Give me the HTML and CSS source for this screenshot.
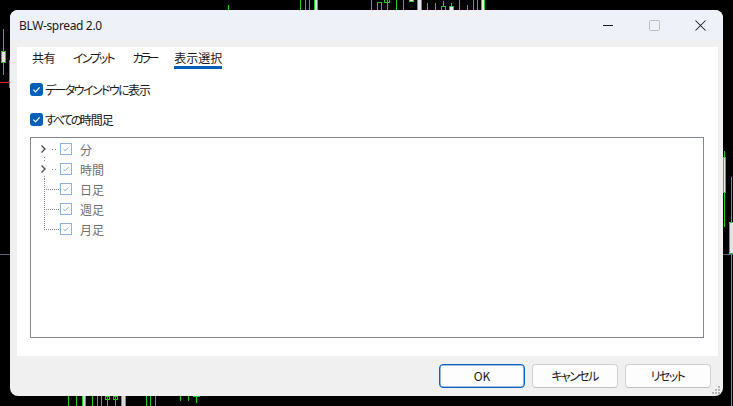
FILE: index.html
```html
<!DOCTYPE html>
<html lang="ja">
<head>
<meta charset="utf-8">
<title>BLW-spread 2.0</title>
<link rel="stylesheet" href="styles.css">
</head>
<body>
<div class="desktop">
  <svg class="chart" width="733" height="406" viewBox="0 0 733 406">
    <g stroke="#1fd01f" stroke-width="1" fill="none" shape-rendering="crispEdges">
      <!-- top -->
      <line x1="228.5" y1="5" x2="228.5" y2="12"/>
      <line x1="300.5" y1="0" x2="300.5" y2="12"/>
      <line x1="305.5" y1="0" x2="305.5" y2="12"/>
      <line x1="309.5" y1="0" x2="309.5" y2="12"/>
      <rect x="314.5" y="-1" width="3" height="13" fill="#e4e4e4"/>
      <line x1="371.5" y1="0" x2="371.5" y2="12"/>
      <rect x="377.5" y="2.5" width="4" height="10"/>
      <line x1="387.5" y1="0" x2="387.5" y2="12"/>
      <rect x="384.5" y="-1" width="5" height="3.5"/>
      <line x1="396.5" y1="0" x2="396.5" y2="12"/>
      <line x1="403.5" y1="0" x2="403.5" y2="12"/>
      <rect x="409.5" y="-1" width="4" height="2.5" fill="#e4e4e4"/>
      <rect x="417.5" y="-1" width="4" height="13" fill="#e4e4e4"/>
      <line x1="427.5" y1="3" x2="427.5" y2="12"/>
      <line x1="435.5" y1="3" x2="435.5" y2="12"/>
      <line x1="443.5" y1="1" x2="443.5" y2="6"/>
      <rect x="441.5" y="6.5" width="4" height="6"/>
      <line x1="451.5" y1="3" x2="451.5" y2="6"/>
      <rect x="449.5" y="6.5" width="4" height="6" fill="#e4e4e4"/>
      <line x1="459.5" y1="0" x2="459.5" y2="12"/>
      <line x1="467.5" y1="5" x2="467.5" y2="12"/>
      <line x1="473.5" y1="0" x2="473.5" y2="12"/>
      <line x1="477.5" y1="0" x2="477.5" y2="12"/>
      <rect x="481.5" y="-1" width="3" height="13" fill="#e4e4e4"/>
      <!-- left -->
      <line x1="3.5" y1="29" x2="3.5" y2="75"/>
      <rect x="1.5" y="51.5" width="4" height="11" fill="#e4e4e4"/>
      <line x1="9.5" y1="60" x2="9.5" y2="88"/>
      <!-- right -->
      <line x1="724.5" y1="151" x2="724.5" y2="227"/>
      <rect x="723.5" y="157.5" width="2" height="35" fill="#e4e4e4"/>
      <line x1="731.5" y1="177" x2="731.5" y2="406"/>
      <rect x="729.5" y="222.5" width="5" height="31" fill="#e4e4e4"/>
      <!-- bottom -->
      <line x1="68.5" y1="394" x2="68.5" y2="406"/>
      <line x1="76.5" y1="394" x2="76.5" y2="406"/>
      <rect x="82.5" y="394" width="3" height="13" fill="#d8d8d8"/>
      <line x1="92.5" y1="394" x2="92.5" y2="406"/>
      <line x1="97.5" y1="394" x2="97.5" y2="406"/>
      <line x1="101.5" y1="394" x2="101.5" y2="406"/>
      <line x1="107.5" y1="394" x2="107.5" y2="406"/>
      <rect x="105.5" y="396.5" width="4" height="3"/>
      <line x1="115.5" y1="394" x2="115.5" y2="406"/>
      <rect x="113.5" y="396.5" width="4" height="3"/>
      <rect x="121.5" y="394" width="4" height="13" fill="#d8d8d8"/>
      <line x1="146.5" y1="394" x2="146.5" y2="406"/>
      <line x1="150.5" y1="394" x2="150.5" y2="406"/>
      <line x1="155.5" y1="394" x2="155.5" y2="406"/>
      <line x1="180.5" y1="394" x2="180.5" y2="401"/>
      <line x1="188.5" y1="394" x2="188.5" y2="401"/>
      <line x1="196.5" y1="394" x2="196.5" y2="403"/>
      <line x1="193" y1="396.5" x2="200" y2="396.5"/>
    </g>
    <line x1="0" y1="82.5" x2="12" y2="82.5" stroke="#e02828" shape-rendering="crispEdges"/>
    <line x1="0" y1="254.5" x2="12" y2="254.5" stroke="#56667e" shape-rendering="crispEdges"/>
    <line x1="721" y1="254.5" x2="733" y2="254.5" stroke="#56667e" shape-rendering="crispEdges"/>
  </svg>

  <div class="window">
    <div class="titlebar">
      <span class="title">BLW-spread 2.0</span>
      <div class="caption">
        <span class="cbtn">
          <svg width="10" height="10" viewBox="0 0 10 10"><line x1="0" y1="5.5" x2="10" y2="5.5" stroke="#1a1a1a" shape-rendering="crispEdges"/></svg>
        </span>
        <span class="cbtn">
          <svg width="11" height="11" viewBox="0 0 11 11"><rect x="0.5" y="0.5" width="10" height="10" rx="1" fill="none" stroke="#bdbdbd"/></svg>
        </span>
        <span class="cbtn">
          <svg width="11" height="11" viewBox="0 0 11 11"><path d="M0.5 0.5 L10.5 10.5 M10.5 0.5 L0.5 10.5" stroke="#1a1a1a" stroke-width="1.05" fill="none"/></svg>
        </span>
      </div>
    </div>

    <div class="client">
      <div class="panel">
        <div class="tabs">
          <span class="tab t-share">共有</span>
          <span class="tab t-input">インプット</span>
          <span class="tab t-color">カラー</span>
          <span class="tab t-view active">表示選択</span>
        </div>

        <div class="options">
          <label class="opt">
            <svg class="cb" width="13" height="13" viewBox="0 0 13 13"><rect width="13" height="13" rx="3" fill="#005fb8"/><path d="M3.4 6.7 L5.5 8.8 L9.6 4.3" stroke="#fff" stroke-width="1.2" fill="none"/></svg>
            <span class="opt-text"><span class="kana-a">データウインドウに</span><span class="kanji">表示</span></span>
          </label>
          <label class="opt">
            <svg class="cb" width="13" height="13" viewBox="0 0 13 13"><rect width="13" height="13" rx="3" fill="#005fb8"/><path d="M3.4 6.7 L5.5 8.8 L9.6 4.3" stroke="#fff" stroke-width="1.2" fill="none"/></svg>
            <span class="opt-text"><span class="kana-b">すべての</span><span class="kanji">時間足</span></span>
          </label>
        </div>

        <div class="tree">
          <div class="row">
            <svg class="gutter" width="29" height="20" viewBox="0 0 29 20" shape-rendering="crispEdges">
              <path d="M10.5 6.5 L14 10 L10.5 13.5" stroke="#4a4a4a" stroke-width="1.3" fill="none" shape-rendering="geometricPrecision"/>
              <rect x="21" y="10" width="1" height="1" fill="#8a8a8a"/>
              <rect x="24" y="10" width="1" height="1" fill="#8a8a8a"/>
              <rect x="13" y="18" width="1" height="1" fill="#8a8a8a"/>
            </svg>
            <svg class="tcb" width="12" height="12" viewBox="0 0 12 12"><rect x="0.5" y="0.5" width="11" height="11" fill="#fff" stroke="#8eb2d8"/><path d="M3.5 6.2 L5.1 7.7 L8.6 4.2" stroke="#7fa8d6" stroke-width="1" fill="none"/></svg>
            <span class="label">分</span>
          </div>
          <div class="row">
            <svg class="gutter" width="29" height="20" viewBox="0 0 29 20" shape-rendering="crispEdges">
              <rect x="13" y="1" width="1" height="1" fill="#8a8a8a"/>
              <path d="M10.5 6.5 L14 10 L10.5 13.5" stroke="#4a4a4a" stroke-width="1.3" fill="none" shape-rendering="geometricPrecision"/>
              <rect x="21" y="10" width="1" height="1" fill="#8a8a8a"/>
              <rect x="24" y="10" width="1" height="1" fill="#8a8a8a"/>
              <line x1="13.5" y1="17" x2="13.5" y2="20" stroke="#8a8a8a" stroke-dasharray="1 1"/>
            </svg>
            <svg class="tcb" width="12" height="12" viewBox="0 0 12 12"><rect x="0.5" y="0.5" width="11" height="11" fill="#fff" stroke="#8eb2d8"/><path d="M3.5 6.2 L5.1 7.7 L8.6 4.2" stroke="#7fa8d6" stroke-width="1" fill="none"/></svg>
            <span class="label">時間</span>
          </div>
          <div class="row">
            <svg class="gutter" width="29" height="20" viewBox="0 0 29 20" shape-rendering="crispEdges">
              <line x1="13.5" y1="0" x2="13.5" y2="20" stroke="#8a8a8a" stroke-dasharray="1 1"/>
              <line x1="15" y1="10.5" x2="29" y2="10.5" stroke="#8a8a8a" stroke-dasharray="1 1"/>
            </svg>
            <svg class="tcb" width="12" height="12" viewBox="0 0 12 12"><rect x="0.5" y="0.5" width="11" height="11" fill="#fff" stroke="#8eb2d8"/><path d="M3.5 6.2 L5.1 7.7 L8.6 4.2" stroke="#7fa8d6" stroke-width="1" fill="none"/></svg>
            <span class="label">日足</span>
          </div>
          <div class="row">
            <svg class="gutter" width="29" height="20" viewBox="0 0 29 20" shape-rendering="crispEdges">
              <line x1="13.5" y1="0" x2="13.5" y2="20" stroke="#8a8a8a" stroke-dasharray="1 1"/>
              <line x1="15" y1="10.5" x2="29" y2="10.5" stroke="#8a8a8a" stroke-dasharray="1 1"/>
            </svg>
            <svg class="tcb" width="12" height="12" viewBox="0 0 12 12"><rect x="0.5" y="0.5" width="11" height="11" fill="#fff" stroke="#8eb2d8"/><path d="M3.5 6.2 L5.1 7.7 L8.6 4.2" stroke="#7fa8d6" stroke-width="1" fill="none"/></svg>
            <span class="label">週足</span>
          </div>
          <div class="row">
            <svg class="gutter" width="29" height="20" viewBox="0 0 29 20" shape-rendering="crispEdges">
              <line x1="13.5" y1="0" x2="13.5" y2="11" stroke="#8a8a8a" stroke-dasharray="1 1"/>
              <line x1="15" y1="10.5" x2="29" y2="10.5" stroke="#8a8a8a" stroke-dasharray="1 1"/>
            </svg>
            <svg class="tcb" width="12" height="12" viewBox="0 0 12 12"><rect x="0.5" y="0.5" width="11" height="11" fill="#fff" stroke="#8eb2d8"/><path d="M3.5 6.2 L5.1 7.7 L8.6 4.2" stroke="#7fa8d6" stroke-width="1" fill="none"/></svg>
            <span class="label">月足</span>
          </div>
        </div>
      </div>

      <div class="footer">
        <button class="btn default">OK</button>
        <button class="btn kana">キャンセル</button>
        <button class="btn kana">リセット</button>
      </div>
    </div>

    <svg class="grip" width="8" height="8" viewBox="0 0 8 8" shape-rendering="crispEdges">
      <g fill="#b4b4b4">
        <rect x="6" y="0" width="2" height="2"/>
        <rect x="3" y="3" width="2" height="2"/><rect x="6" y="3" width="2" height="2"/>
        <rect x="0" y="6" width="2" height="2"/><rect x="3" y="6" width="2" height="2"/><rect x="6" y="6" width="2" height="2"/>
      </g>
    </svg>
  </div>
</div>
</body>
</html>
```
FILE: styles.css
```css
* { box-sizing: border-box; }

html, body {
  margin: 0;
  padding: 0;
  background: #000;
}

body {
  width: 733px;
  height: 406px;
  overflow: hidden;
  font-family: "Noto Sans CJK JP", sans-serif;
  font-size: 12px;
  font-feature-settings: "palt" 1;
  color: #1a1a1a;
}

.desktop {
  position: relative;
  width: 733px;
  height: 406px;
  background: #000;
}

.chart {
  position: absolute;
  left: 0;
  top: 0;
}

.window {
  position: absolute;
  left: 10px;
  top: 10px;
  width: 713px;
  height: 386px;
  border-radius: 8px;
  background: #f0f0f0;
  overflow: hidden;
  display: flex;
  flex-direction: column;
}

.titlebar {
  height: 30px;
  flex: none;
  background: #eef2f8;
  display: flex;
  align-items: center;
  justify-content: space-between;
}

.title {
  padding-left: 9px;
  font-family: "Noto Sans", sans-serif;
  font-size: 12px;
  letter-spacing: -0.35px;
  color: #1a1a1a;
}

.caption {
  display: flex;
  height: 30px;
}

.cbtn {
  width: 46px;
  height: 30px;
  display: flex;
  align-items: center;
  justify-content: center;
}

.cbtn svg { display: block; }

.client {
  flex: 1;
  display: flex;
  flex-direction: column;
  padding: 7px 5px 0 7px;
}

.panel {
  height: 309px;
  flex: none;
  background: #fff;
  display: flex;
  flex-direction: column;
}

.tabs {
  display: flex;
  padding: 2px 0 0 15px;
}

.tab {
  line-height: 17px;
  border-bottom: 3px solid transparent;
  color: #1a1a1a;
}

.t-share { margin-right: 18px; letter-spacing: -0.5px; }
.t-input { letter-spacing: -2px; margin-right: 19px; }
.t-color { letter-spacing: -3.2px; margin-right: 18px; }
.t-view { letter-spacing: 0; }

.tab.active {
  border-bottom-color: #005fb8;
}

.options {
  display: flex;
  flex-direction: column;
  gap: 10px;
  padding: 10px 0 0 13px;
}

.opt {
  display: flex;
  align-items: center;
  height: 20px;
  gap: 2px;
  color: #1a1a1a;
}

.kana-a { letter-spacing: -1.6px; }
.kana-b { letter-spacing: -2.4px; }
.kanji { letter-spacing: -1px; }

.cb { display: block; flex: none; }

.tree {
  margin: 8px 14px 0 13px;
  height: 201px;
  border: 1px solid #838790;
  padding-top: 1px;
  display: flex;
  flex-direction: column;
}

.row {
  height: 20px;
  display: flex;
  align-items: center;
}

.gutter { display: block; flex: none; }

.tcb { display: block; flex: none; }

.label {
  margin-left: 8px;
  color: #707070;
  line-height: 19px;
}

.footer {
  display: flex;
  justify-content: flex-end;
  gap: 7px;
  padding: 8px 7px 0 0;
}

.btn {
  width: 86px;
  height: 24px;
  border: 1px solid #d0d0d0;
  border-bottom-color: #c2c2c2;
  border-radius: 4px;
  background: #fdfdfd;
  font-family: "Noto Sans CJK JP", sans-serif;
  font-feature-settings: "palt" 1;
  font-size: 12px;
  color: #1a1a1a;
  padding: 0;
  line-height: 20px;
}

.btn.kana { letter-spacing: -1.6px; text-indent: -1px; }

.btn.default {
  border: 1px solid #0a64be;
  box-shadow: inset 0 0 0 0.6px #3d86d0;
}

.grip {
  position: absolute;
  right: 3px;
  bottom: 2px;
}
```
